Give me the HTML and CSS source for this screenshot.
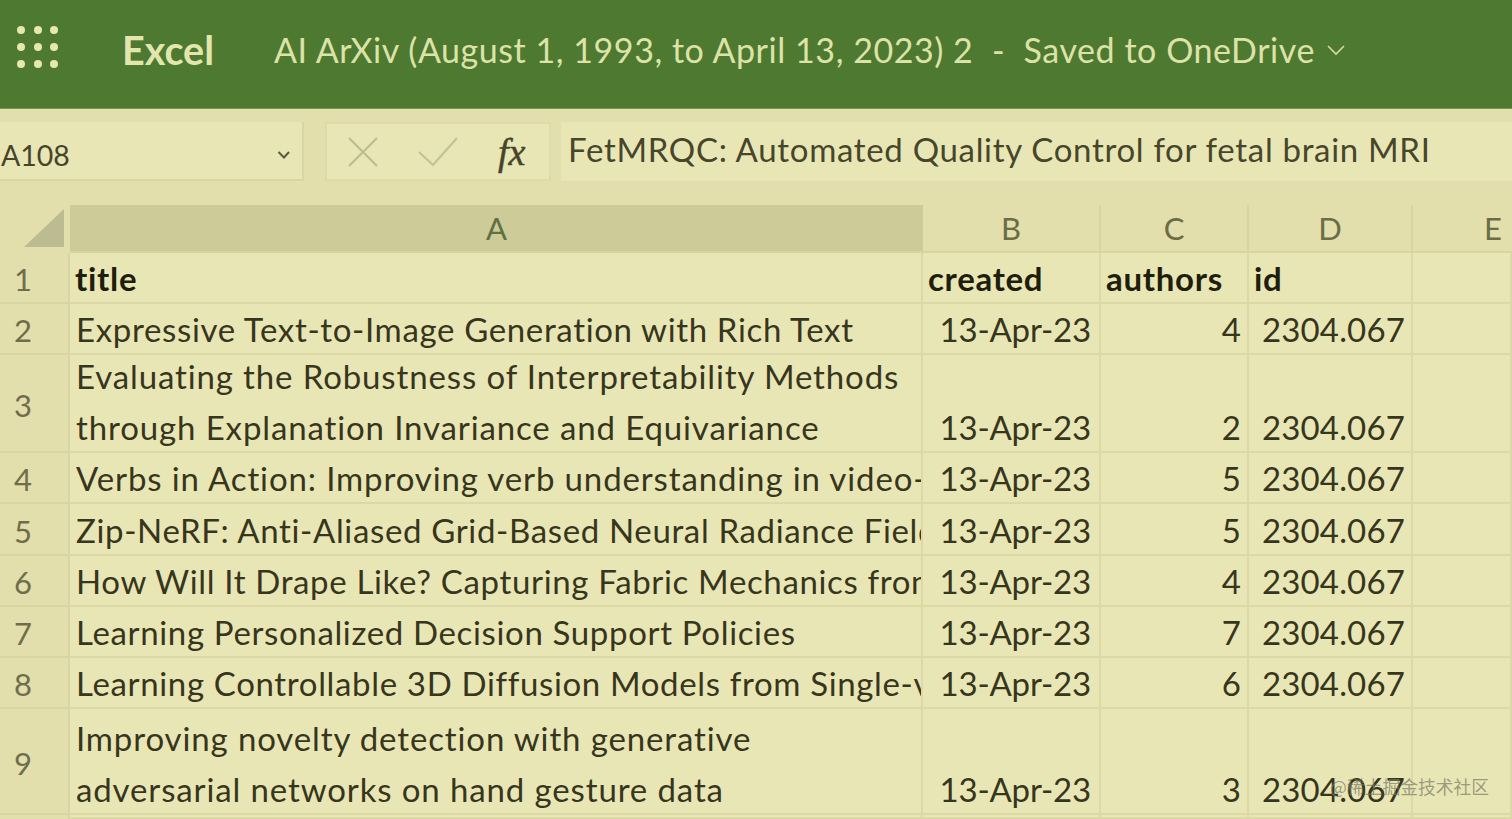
FILE: index.html
```html
<!DOCTYPE html>
<html lang="en">
<head>
<meta charset="utf-8">
<title>Excel</title>
<link rel="stylesheet" href="styles.css">
</head>
<body>
<header class="appbar">
  <svg class="waffle" width="42" height="42" viewBox="0 0 42 42" aria-hidden="true">
    <g fill="#e6e8ae">
      <circle cx="4" cy="4" r="4"/><circle cx="21" cy="4" r="4"/><circle cx="37" cy="4" r="4"/>
      <circle cx="4" cy="21" r="4"/><circle cx="21" cy="21" r="4"/><circle cx="37" cy="21" r="4"/>
      <circle cx="4" cy="38" r="4"/><circle cx="21" cy="38" r="4"/><circle cx="37" cy="38" r="4"/>
    </g>
  </svg>
  <span class="brand">Excel</span>
  <span class="doc">AI ArXiv (August 1, 1993, to April 13, 2023) 2&nbsp; -&nbsp; Saved to OneDrive</span>
  <svg class="doc-caret" width="20" height="12" viewBox="0 0 20 12" aria-hidden="true"><path d="M2 2l8 8 8-8" fill="none" stroke="#d5dca0" stroke-width="1.6"/></svg>
</header>
<section class="formula">
  <div class="namebox">
    <span>A108</span>
    <svg width="14" height="10" viewBox="0 0 14 10" aria-hidden="true"><path d="M1.5 2l5.500 5.500L12 2" fill="none" stroke="#5b5a3c" stroke-width="2"/></svg>
  </div>
  <div class="fbtns">
    <svg width="30" height="30" viewBox="0 0 30 30" aria-hidden="true"><path d="M1 1l28 28M29 1L1 29" fill="none" stroke="#bdbc92" stroke-width="2.200"/></svg>
    <svg width="40" height="30" viewBox="0 0 40 30" aria-hidden="true"><path d="M1 15l14 13L39 1" fill="none" stroke="#c2c298" stroke-width="2.200"/></svg>
    <span class="fx">fx</span>
  </div>
  <div class="fbar">FetMRQC: Automated Quality Control for fetal brain MRI</div>
</section>
<main class="sheet">
  <div class="corner"><svg width="40" height="38" viewBox="0 0 40 38" aria-hidden="true"><path d="M40 0V38H0Z" fill="#bdbb91"/></svg></div>
  <div class="colh active">A</div><div class="colh">B</div><div class="colh">C</div><div class="colh">D</div><div class="colh e">E</div>

  <div class="rowh">1</div><div class="c b"><span>title</span></div><div class="c b"><span>created</span></div><div class="c b"><span>authors</span></div><div class="c b"><span>id</span></div><div class="c"></div>
  <div class="rowh">2</div><div class="c t"><span>Expressive Text-to-Image Generation with Rich Text</span></div><div class="c d"><span>13-Apr-23</span></div><div class="c n"><span>4</span></div><div class="c i"><span>2304.067</span></div><div class="c"></div>
  <div class="rowh">3</div><div class="c t wide"><span>Evaluating the Robustness of Interpretability Methods<br>through Explanation Invariance and Equivariance</span></div><div class="c d"><span>13-Apr-23</span></div><div class="c n"><span>2</span></div><div class="c i"><span>2304.067</span></div><div class="c"></div>
  <div class="rowh">4</div><div class="c t wide"><span>Verbs in Action: Improving verb understanding in video-</span></div><div class="c d"><span>13-Apr-23</span></div><div class="c n"><span>5</span></div><div class="c i"><span>2304.067</span></div><div class="c"></div>
  <div class="rowh">5</div><div class="c t"><span>Zip-NeRF: Anti-Aliased Grid-Based Neural Radiance Fields</span></div><div class="c d"><span>13-Apr-23</span></div><div class="c n"><span>5</span></div><div class="c i"><span>2304.067</span></div><div class="c"></div>
  <div class="rowh">6</div><div class="c t"><span>How Will It Drape Like? Capturing Fabric Mechanics from</span></div><div class="c d"><span>13-Apr-23</span></div><div class="c n"><span>4</span></div><div class="c i"><span>2304.067</span></div><div class="c"></div>
  <div class="rowh">7</div><div class="c t"><span>Learning Personalized Decision Support Policies</span></div><div class="c d"><span>13-Apr-23</span></div><div class="c n"><span>7</span></div><div class="c i"><span>2304.067</span></div><div class="c"></div>
  <div class="rowh">8</div><div class="c t"><span>Learning Controllable 3D Diffusion Models from Single-view</span></div><div class="c d"><span>13-Apr-23</span></div><div class="c n"><span>6</span></div><div class="c i"><span>2304.067</span></div><div class="c"></div>
  <div class="rowh">9</div><div class="c t wide"><span>Improving novelty detection with generative<br>adversarial networks on hand gesture data</span></div><div class="c d"><span>13-Apr-23</span></div><div class="c n"><span>3</span></div><div class="c i"><span>2304.067</span></div><div class="c"></div>
  <div class="rowh"></div><div class="c"></div><div class="c"></div><div class="c"></div><div class="c"></div><div class="c"></div>
</main>
<div class="watermark">@稀土掘金技术社区</div>
</body>
</html>
```
FILE: styles.css
```css
* { box-sizing: border-box; }
html, body { margin: 0; height: 819px; overflow: hidden; }
body {
  background: #e9e6b5;
  font-family: "Lato", "Liberation Sans", sans-serif;
  color: #33321c;
}
.appbar {
  height: 109px;
  background: #4e7930;
  border-bottom: 1px solid #7c9650;
  display: flex;
  align-items: center;
  color: #dde2a8;
  padding-left: 17px;
}
.waffle { flex: none; margin-top: -14px; }
.brand {
  margin-left: 63px;
  margin-top: -10px;
  font-size: 39.500px;
  font-weight: 700;
  width: 152px;
  color: #e2e6ae;
}
.doc { margin-top: -10px; font-size: 34px; font-weight: 400; letter-spacing: 0.55px; white-space: nowrap; }
.doc-caret { margin-left: 11px; margin-top: -8px; }
.formula {
  height: 96px;
  background: #e2dfac;
  display: flex;
  padding-top: 13px;
  align-items: flex-start;
}
.namebox {
  width: 304px;
  height: 59px;
  background: #e9e6b6;
  border-right: 2px solid #d9d6a4;
  border-bottom: 2px solid #d9d6a4;
  display: flex;
  align-items: center;
  justify-content: space-between;
  padding: 8px 11px 0 1px;
  font-size: 28.500px;
  color: #46452b;
}
.fbtns {
  width: 226px;
  height: 59px;
  margin-left: 21px;
  background: #e9e6b6;
  border: 2px solid #dedba9;
  display: flex;
  align-items: center;
  padding-left: 21px;
  gap: 40px;
}
.fx {
  font-family: "Liberation Serif", serif;
  font-style: italic;
  font-size: 38px;
  color: #46452b;
  margin-left: 0;
  -webkit-text-stroke: 0.5px #46452b;
}
.fbar {
  flex: 1;
  height: 59px;
  margin-left: 10px;
  background: #e9e6b6;
  font-size: 33px;
  letter-spacing: 0.68px;
  line-height: 54px;
  padding-left: 7px;
  color: #47462b;
  white-space: nowrap;
}
.sheet {
  display: grid;
  grid-template-columns: 70px 853px 178px 148px 164px 99px;
  grid-template-rows: 48px 51px 51px 98px 51px 52px 51px 51px 51px 106px 4px;
  background: #e9e6b6;
  font-size: 33px;
  line-height: 51px;
}
.corner {
  background: #e2dfac;
  display: flex;
  justify-content: flex-end;
  align-items: flex-end;
  padding: 0 6px 6px 0;
}
.colh {
  background: #e2dfac;
  border-right: 2px solid #d8d5a3;
  border-bottom: 2px solid #d8d5a3;
  text-align: center;
  line-height: 46px;
  font-size: 31px;
  color: #6b6d46;
}
.colh.active { background: #cdcb97; border-right: 0; color: #5f7044; }
.colh.e { border-right: 0; text-align: right; padding-right: 10px; }
.rowh {
  background: #e2dfac;
  border-right: 2px solid #d8d5a3;
  border-bottom: 2px solid #d8d5a3;
  display: flex;
  align-items: center;
  padding: 4px 0 0 14px;
  font-size: 31px;
  color: #6f6e4b;
}
.c {
  border-right: 2px solid #dcd9a7;
  border-bottom: 2px solid #dcd9a7;
  padding-left: 6px;
  overflow: hidden;
  white-space: nowrap;
  display: flex;
  align-items: flex-end;
  color: #37361d;
}
.c > span { margin-bottom: -2px; }
.c.t { letter-spacing: 0.65px; }
.c.t.wide { letter-spacing: 0.87px; }
.c.b { font-weight: 700; color: #1f1e0c; letter-spacing: 0.7px; padding-left: 5px; }
.c.d { justify-content: flex-end; padding-right: 8px; letter-spacing: -0.2px; }
.c.n { justify-content: flex-end; padding-right: 6px; }
.c.i { padding-left: 13px; letter-spacing: 0.15px; }
.watermark {
  position: absolute;
  left: 1330px;
  top: 774px;
  font-family: "Noto Sans CJK SC", sans-serif;
  font-size: 17.800px;
  line-height: 24px;
  color: rgba(120, 120, 100, 0.7);
}
```
